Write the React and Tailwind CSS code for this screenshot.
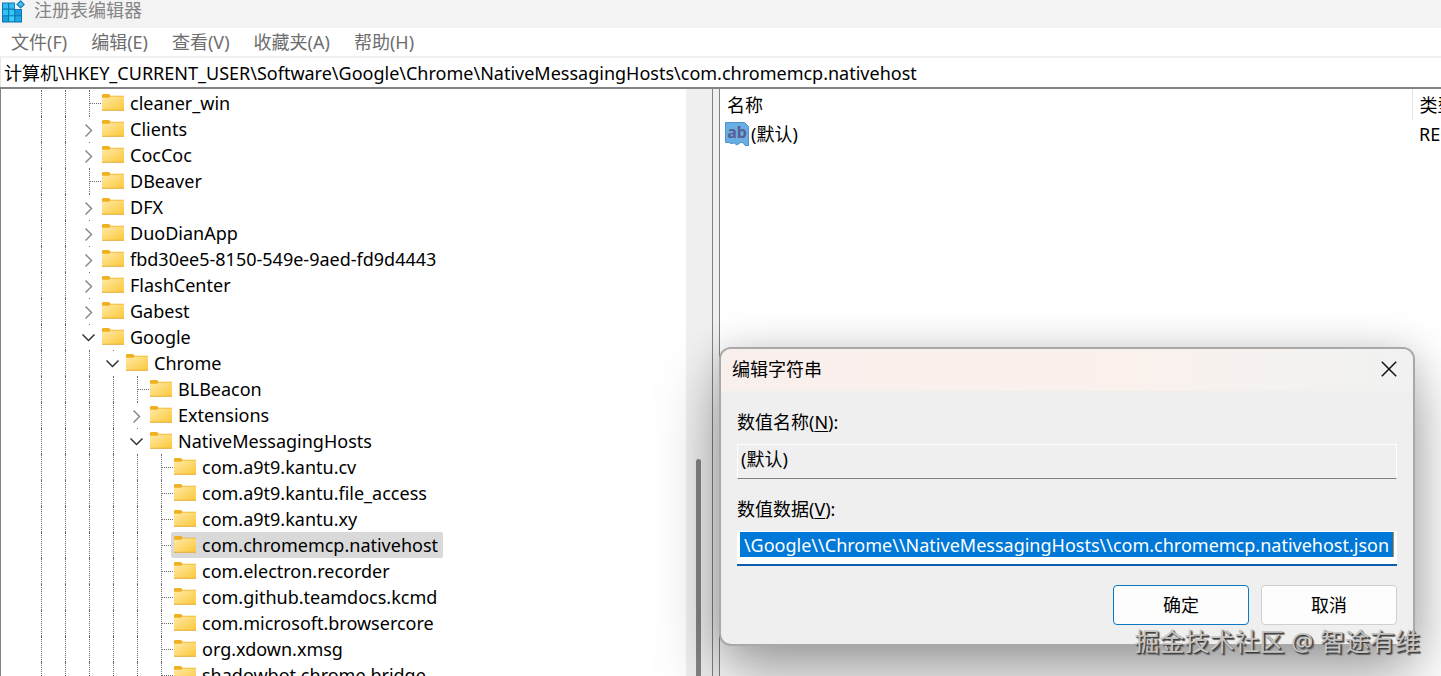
import { useId } from "react";

const menus = ["文件(F)", "编辑(E)", "查看(V)", "收藏夹(A)", "帮助(H)"];

const keys = [
  { name: "cleaner_win", depth: 2 },
  { name: "Clients", depth: 2, state: "closed" },
  { name: "CocCoc", depth: 2, state: "closed" },
  { name: "DBeaver", depth: 2 },
  { name: "DFX", depth: 2, state: "closed" },
  { name: "DuoDianApp", depth: 2, state: "closed" },
  { name: "fbd30ee5-8150-549e-9aed-fd9d4443", depth: 2, state: "closed" },
  { name: "FlashCenter", depth: 2, state: "closed" },
  { name: "Gabest", depth: 2, state: "closed" },
  { name: "Google", depth: 2, state: "open" },
  { name: "Chrome", depth: 3, state: "open" },
  { name: "BLBeacon", depth: 4 },
  { name: "Extensions", depth: 4, state: "closed" },
  { name: "NativeMessagingHosts", depth: 4, state: "open" },
  { name: "com.a9t9.kantu.cv", depth: 5 },
  { name: "com.a9t9.kantu.file_access", depth: 5 },
  { name: "com.a9t9.kantu.xy", depth: 5 },
  { name: "com.chromemcp.nativehost", depth: 5, selected: true },
  { name: "com.electron.recorder", depth: 5 },
  { name: "com.github.teamdocs.kcmd", depth: 5 },
  { name: "com.microsoft.browsercore", depth: 5 },
  { name: "org.xdown.xmsg", depth: 5 },
  { name: "shadowbot.chrome.bridge", depth: 5 },
];

function FolderIcon() {
  const id = useId();
  return (
    <svg viewBox="0 0 24 24" className="size-6 shrink-0" aria-hidden="true">
      <defs>
        <linearGradient id={id} x1="0" y1="0" x2="1" y2="1">
          <stop offset="0" stopColor="#ffe9a6" />
          <stop offset="1" stopColor="#fcc93c" />
        </linearGradient>
      </defs>
      <path d="M1 4.200Q1 3 2.200 3H8l1.500 1.800H23V8H1Z" fill="#efb021" />
      <path d="M1 6.800H8l1.500-1.200H23V19H1Z" fill={`url(#${id})`} />
      <path d="M1 19.300H23" stroke="#e3a92f" strokeWidth="1" />
    </svg>
  );
}

function Guide() {
  return (
    <span className="h-full w-6 shrink-0 pl-3">
      <span className="block h-full border-l border-dotted border-[#6b6b6b]" />
    </span>
  );
}

function Branch({ state }) {
  if (!state) {
    return (
      <span className="flex h-full w-6 shrink-0 items-center pl-3">
        <span className="h-full border-l border-dotted border-[#6b6b6b]" />
        <span className="flex-1 border-t border-dotted border-[#6b6b6b]" />
      </span>
    );
  }
  const open = state === "open";
  return (
    <button type="button" aria-label={open ? "折叠" : "展开"} className="h-full w-6 shrink-0">
      <svg viewBox="0 0 24 26" className="h-full w-6" fill="none">
        <path d="M12 0h1v1h-1z" fill="#6b6b6b" />
        {open ? (
          <path d="M5.500 10.500l6 6 6-6" stroke="#333" strokeWidth="1.500" />
        ) : (
          <path d="M8.500 8.500l6 6-6 6" stroke="#8c8c8c" strokeWidth="1.500" />
        )}
      </svg>
    </button>
  );
}

function KeyRow({ item }) {
  return (
    <li role="treeitem" aria-selected={!!item.selected} className="flex h-[26px] items-center">
      {Array.from({ length: item.depth }, (_, i) => (
        <Guide key={i} />
      ))}
      <Branch state={item.state} />
      <span
        className={
          "-ml-0.5 flex h-full items-center gap-[5px] rounded-xs pr-[5px] pl-0.5 whitespace-nowrap " +
          (item.selected ? "bg-[#d9d9d9]" : "")
        }
      >
        <FolderIcon />
        {item.name}
      </span>
    </li>
  );
}

function RegistryIcon() {
  return (
    <svg viewBox="0 0 24 24" className="size-6 shrink-0" aria-hidden="true">
      <path d="M1 2.500H14V9H21V22.500H1Z" fill="#0b78b5" />
      <path d="M2 3.500h5v5H2zM8.200 3.500h5v5h-5z" fill="#36bdf0" />
      <path d="M2 9.700h5v5.500H2zM8.200 9.700h5v5.500h-5z" fill="#2fc6f7" />
      <path d="M14.400 9.700H20v5.500h-5.600z" fill="#1a9bdc" />
      <path d="M2 16.300h5v5H2z" fill="#1c9fe0" />
      <path d="M8.200 16.300h5v5h-5z" fill="#3fcdf9" />
      <path d="M14.400 16.300H20v5h-5.600z" fill="#22a9e6" />
      <path d="M19.600 0L24 4.400 19.600 8.800 15.200 4.400Z" fill="#1581bd" />
      <path d="M19.600 2L22 4.400 19.600 6.800 17.200 4.400Z" fill="#53c6f2" />
    </svg>
  );
}

function StringValueIcon() {
  return (
    <span className="relative flex size-6 shrink-0 items-center justify-center">
      <svg viewBox="0 0 24 24" className="absolute inset-0 size-6" aria-hidden="true">
        <path
          d="M.5 .5H19.500L23.500 4.500V23.500H20L18 20.500Q15 20 13.500 22L11.500 23 9.500 21 6 21.500 4 20.500H.5Z"
          fill="#68aee2"
          stroke="#4a94cf"
        />
      </svg>
      <span className="relative pb-1 text-base leading-5 font-bold text-[#5b5d94]">ab</span>
    </span>
  );
}

function EditStringDialog() {
  return (
    <div
      role="dialog"
      aria-labelledby="edit-title"
      className="absolute top-[347px] right-[26px] w-[696px] rounded-xl border-2 border-[#a9a9a9] bg-[#efefef] shadow-[0_32px_64px_rgba(0,0,0,0.34),0_2px_36px_rgba(0,0,0,0.14)]"
    >
      <header className="flex h-[42px] items-center justify-between rounded-t-[10px] bg-linear-to-r from-[#f9f0ed] via-[#faf1ed] via-60% to-[#f0f2f1] pr-4 pb-0.5 pl-[11px]">
        <h2 id="edit-title">编辑字符串</h2>
        <button type="button" aria-label="关闭" className="size-4">
          <svg viewBox="0 0 16 16" className="size-4" stroke="#111" strokeWidth="1.500">
            <path d="M.8.8l14.400 14.400M15.200.8L.8 15.200" />
          </svg>
        </button>
      </header>
      <form className="px-4 pt-[17px] pb-[19px]">
        <label htmlFor="value-name" className="block h-7 leading-7">
          数值名称(<u className="underline-offset-2">N</u>):
        </label>
        <input
          id="value-name"
          readOnly
          value="(默认)"
          className="mt-2 block h-[35px] w-full border border-b-[#808080] border-white bg-transparent px-[3px] pb-2 outline-none"
        />
        <label htmlFor="value-data" className="mt-4 block h-7 leading-7">
          数值数据(<u className="underline-offset-2">V</u>):
        </label>
        <div className="mt-2 flex h-[35px] border-b-2 border-[#0a5fae] bg-white px-[3px] pt-px pb-[7px]">
          <input
            id="value-data"
            readOnly
            value={"\\Google\\\\Chrome\\\\NativeMessagingHosts\\\\com.chromemcp.nativehost.json"}
            className="w-full border-r border-[#c98a3a] bg-[#0078d7] text-center text-white outline-none"
          />
        </div>
        <div className="mt-[19px] flex justify-end gap-3">
          <button type="button" className="h-10 w-[136px] rounded-sm border border-[#0a78c2] bg-[#fdfdfd]">
            确定
          </button>
          <button type="button" className="h-10 w-[136px] rounded-sm border border-[#d0d0d0] bg-[#fdfdfd]">
            取消
          </button>
        </div>
      </form>
    </div>
  );
}

export default function App() {
  return (
    <div className="relative flex h-screen flex-col overflow-hidden bg-white font-['Noto_Sans','Noto_Sans_CJK_SC',sans-serif] text-[18px] leading-[26px] text-black">
      <header className="flex h-7 shrink-0 items-start gap-[9px] bg-[#f3f3f3] pl-px text-[#858585]">
        <RegistryIcon />
        <h1 className="leading-5">注册表编辑器</h1>
      </header>
      <nav className="flex h-[30px] shrink-0 items-center gap-6 border-b-2 border-[#f0f0f0] pl-[11px] text-[#6e6e6e]">
        {menus.map((m) => (
          <button key={m} type="button">
            {m}
          </button>
        ))}
      </nav>
      <input
        aria-label="地址"
        readOnly
        value={"计算机\\HKEY_CURRENT_USER\\Software\\Google\\Chrome\\NativeMessagingHosts\\com.chromemcp.nativehost"}
        className="h-[29px] w-full shrink-0 border-l border-[#e5e5e5] pb-0.5 pl-[3px] outline-none"
      />
      <main className="flex min-h-0 flex-1 bg-[#f0f0f0]">
        <section className="flex w-[713px] shrink-0 border-x border-t-2 border-[#828282] bg-white">
          <ul role="tree" className="min-w-0 flex-1 overflow-hidden pt-px pl-7">
            {keys.map((k) => (
              <KeyRow key={k.name} item={k} />
            ))}
          </ul>
          <div className="w-[26px] shrink-0 bg-[#f0f0f0] pt-[370px] pl-2.5">
            <div className="h-full w-[5px] rounded-t-full bg-[#858585]" />
          </div>
        </section>
        <div className="w-1.5 shrink-0 border-t-2 border-[#828282]" />
        <section className="min-w-0 flex-1 overflow-hidden border-t-2 border-l border-[#828282] bg-white">
          <table className="w-full table-fixed border-collapse text-left whitespace-nowrap">
            <thead>
              <tr className="h-[31px]">
                <th className="overflow-hidden border-r border-[#e2e2e2] p-0 pl-[7px] font-normal">名称</th>
                <th className="w-[29px] overflow-hidden p-0 pl-[7px] font-normal">类型</th>
              </tr>
            </thead>
            <tbody>
              <tr className="h-7">
                <td className="p-0 pl-[5px]">
                  <span className="flex items-center gap-0.5">
                    <StringValueIcon />
                    (默认)
                  </span>
                </td>
                <td className="overflow-hidden p-0 pl-[7px]">REG_SZ</td>
              </tr>
            </tbody>
          </table>
        </section>
      </main>
      <EditStringDialog />
      <p className="absolute right-[21px] bottom-[17px] text-[25px] leading-9 whitespace-nowrap text-[#c4c4c4] [text-shadow:1px_1px_1px_#333,2px_2px_1px_#666]">
        掘金技术社区 @ 智途有维
      </p>
    </div>
  );
}
